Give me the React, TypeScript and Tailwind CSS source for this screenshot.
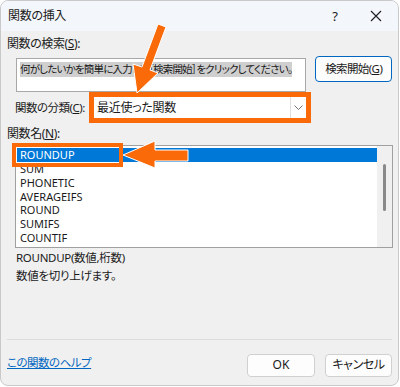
import React from "react";

const items = ["SUM", "PHONETIC", "AVERAGEIFS", "ROUND", "SUMIFS", "COUNTIF"];

export default function App() {
  const font = "font-['Noto_Sans','Noto_Sans_CJK_JP',sans-serif] [font-feature-settings:'palt']";
  return (
    <div className={`relative w-[400px] h-[387px] bg-white ${font} text-[12px] text-[#1a1a1a]`}>
      <div className="flex flex-col w-[399px] h-[386px] rounded-[8px] border border-[#c9c9c9] bg-[#f0f0f0] overflow-hidden">
        {/* title bar */}
        <div className="flex items-center h-[30px] bg-[#f3f6fb] pl-[7px] pr-[14px] shrink-0">
          <span className="text-[12px] leading-none tracking-[-0.3px]">関数の挿入</span>
          <span className="ml-auto mr-[32px] text-[13px] leading-none">?</span>
          <svg width="12" height="12" viewBox="0 0 12 12" className="mr-[2px]">
            <path d="M1 1L11 11M11 1L1 11" stroke="#222" strokeWidth="1.2" />
          </svg>
        </div>
        {/* body */}
        <div className="flex flex-col pl-[6px] pr-[6px] flex-1">
          <div className="h-[22px] mt-[2px] flex items-center leading-none tracking-[-0.4px]">
            関数の検索(<span className="underline">S</span>):
          </div>
          <div className="flex items-start">
            <div className="ml-[9px] mt-[3px] w-[292px] h-[34px] bg-white border border-[#a8a8a8] pl-[3px] pt-[1px] overflow-hidden">
              <span className="bg-[#cfcfcf] text-[10.5px] tracking-[-0.8px] leading-[15px] whitespace-nowrap inline-block">
                何がしたいかを簡単に入力して［検索開始］をクリックしてください。
              </span>
            </div>
            <div className="ml-[9px] mt-[1px] w-[77px] h-[26px] rounded-[4px] border border-[#0067c0] bg-[#fdfdfd] flex items-center justify-center text-[11.5px] tracking-[-0.6px] leading-none whitespace-nowrap">
              検索開始(<span className="underline">G</span>)
            </div>
          </div>
          <div className="flex items-center h-[31px]">
            <span className="ml-[8px] w-[74px] leading-none whitespace-nowrap text-[11.5px] tracking-[-0.5px]">
              関数の分類(<span className="underline">C</span>):
            </span>
            <div className="w-[222px] h-[31px] border-[5px] border-[#fb6a08] bg-white flex items-center">
              <span className="pl-[3px] text-[12px] leading-none flex-1 tracking-[-0.3px]">最近使った関数</span>
              <div className="w-[16px] h-full border-l border-[#e0e0e0] flex items-center justify-center">
                <svg width="9" height="6" viewBox="0 0 9 6">
                  <path d="M0.5 0.5L4.5 4.5L8.5 0.5" stroke="#777" strokeWidth="1" fill="none" />
                </svg>
              </div>
            </div>
          </div>
          <div className="h-[22px] flex items-center leading-none tracking-[-0.4px]">
            関数名(<span className="underline">N</span>):
          </div>
          <div className="ml-[8px] w-[378px] h-[103px] border border-[#a0a0a0] bg-white flex pt-[2px] pl-[1px]">
            <div className="flex flex-col flex-1 text-[11px] leading-[13.8px]">
              <div className="bg-[#0078d7] text-white pl-[3px] h-[14px] leading-[14px]">ROUNDUP</div>
              {items.map((t) => (
                <div key={t} className="pl-[3px] h-[13.8px]">{t}</div>
              ))}
            </div>
            <div className="w-[15px] -mt-[2px] h-[101px] bg-[#f0f0f0] flex justify-center pt-[18px]">
              <div className="w-[3px] h-[47px] rounded-full bg-[#8a8a8a]" />
            </div>
          </div>
          <div className="ml-[9px] mt-[1px] text-[11.5px] leading-[18px] tracking-[-0.3px]">ROUNDUP(数値,桁数)</div>
          <div className="ml-[9px] text-[11.5px] leading-[18px] tracking-[-0.3px]">数値を切り上げます。</div>
          <div className="flex-1" />
          <div className="h-px bg-[#dcdcdc]" />
          <div className="flex items-center h-[45px] pt-[5px]">
            <span className="text-[#0067c0] underline text-[11.5px] leading-none tracking-[-0.5px] -mt-[4px]">この関数のヘルプ</span>
            <div className="ml-auto w-[68px] h-[23px] rounded-[4px] border border-[#d0d0d0] bg-[#fdfdfd] flex items-center justify-center leading-none">OK</div>
            <div className="ml-[10px] w-[67px] h-[23px] rounded-[4px] border border-[#d0d0d0] bg-[#fdfdfd] flex items-center justify-center leading-none tracking-[-0.4px]">キャンセル</div>
          </div>
        </div>
      </div>

      {/* orange box around ROUNDUP */}
      <div className="absolute left-[12px] top-[143px] w-[111px] h-[24px] border-[4px] border-[#fb6a08]" />

      {/* arrows */}
      <svg className="absolute left-0 top-0" width="400" height="387" viewBox="0 0 400 387">
        <polygon
          points="166,27 158,24 142,67 133,64 137,93 158,73 150,70"
          fill="#fb6a08"
          stroke="#ffffff"
          strokeWidth="1"
          strokeLinejoin="miter"
        />
        <polygon
          points="123,155 155,141 155,150 188,150 188,161 155,161 155,168"
          fill="#fb6a08"
          stroke="#ffffff"
          strokeWidth="1"
        />
      </svg>
    </div>
  );
}
